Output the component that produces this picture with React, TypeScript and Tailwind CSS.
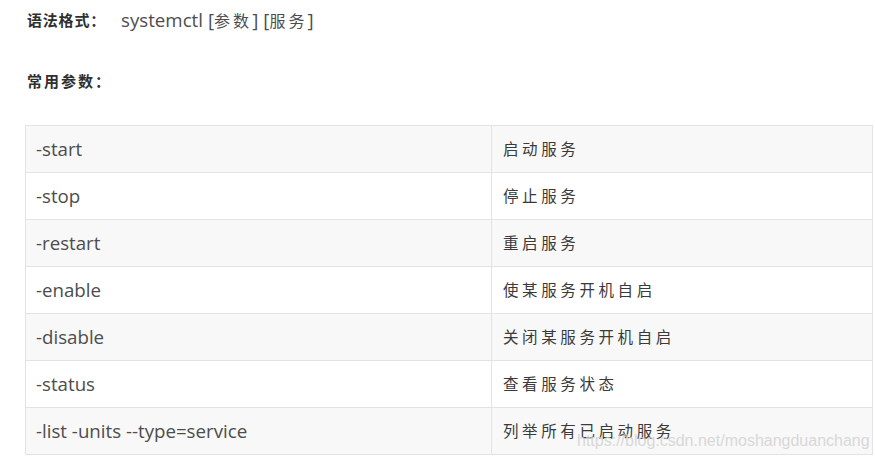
const rows: [string, string][] = [
  ["-start", "启动服务"],
  ["-stop", "停止服务"],
  ["-restart", "重启服务"],
  ["-enable", "使某服务开机自启"],
  ["-disable", "关闭某服务开机自启"],
  ["-status", "查看服务状态"],
  ["-list -units --type=service", "列举所有已启动服务"],
];

const en = "font-['Open_Sans','Liberation_Sans',sans-serif]";
const cn = "font-['Noto_Sans_CJK_SC',serif]";

export default function App() {
  return (
    <div className="relative h-[461px] w-[875px] overflow-hidden bg-white text-[#4d4d4d]">
      <div className="flex h-[41px] items-center pl-[27px]">
        <span className={`${cn} text-[15px] font-bold tracking-[0.8px] text-[#2f2f2f]`}>语法格式：</span>
        <span className={`${en} ml-[15px] text-[18.7px]`}>systemctl</span>
        <span className={`${en} ml-[5px] text-[18.7px]`}>
          [<span className={`${cn} text-[16px] tracking-[3px]`}>参数</span>]
        </span>
        <span className={`${en} ml-[5px] text-[18.7px]`}>
          [<span className={`${cn} text-[16px] tracking-[3px]`}>服务</span>]
        </span>
      </div>
      <div className="mt-[20px] flex h-[40px] items-center pl-[27px]">
        <span className={`${cn} text-[15px] font-bold tracking-[2px] text-[#2f2f2f]`}>常用参数：</span>
      </div>
      <div className="mt-[24px] ml-[25px] w-[848px] border-x border-b border-[#e3e3e3]">
        {rows.map(([a, b], i) => (
          <div
            key={a}
            className={`flex h-[47px] border-t border-[#e3e3e3] ${i % 2 === 0 ? "bg-[#f8f8f8]" : "bg-white"}`}
          >
            <div className={`${en} flex w-[466px] items-center border-r border-[#e3e3e3] pl-[10px] text-[18.7px]`}>{a}</div>
            <div className={`${cn} flex flex-1 items-center pl-[11px] text-[15.5px] tracking-[3.6px] text-[#3a3a3a]`}>{b}</div>
          </div>
        ))}
      </div>
      <div className="pointer-events-none absolute left-[577px] top-[431px] font-['Liberation_Sans',sans-serif] text-[16px] leading-[20px] text-[#cfcfcf]/80">
        https://blog.csdn.net/moshangduanchang
      </div>
    </div>
  );
}
